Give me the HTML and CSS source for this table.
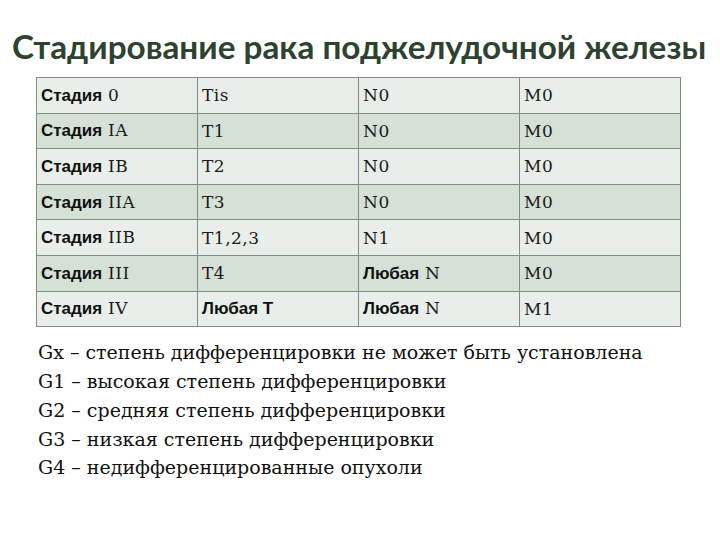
FILE: index.html
```html
<!DOCTYPE html>
<html lang="ru">
<head>
<meta charset="utf-8">
<link rel="stylesheet" href="styles.css">
</head>
<body>
<div class="slide">
  <h1 class="title">Стадирование рака поджелудочной железы</h1>
  <table class="stages">
    <tr class="odd"><td><span class="sans">Стадия</span> 0</td><td>Tis</td><td>N0</td><td>M0</td></tr>
    <tr class="even"><td><span class="sans">Стадия</span> IA</td><td>T1</td><td>N0</td><td>M0</td></tr>
    <tr class="odd"><td><span class="sans">Стадия</span> IB</td><td>T2</td><td>N0</td><td>M0</td></tr>
    <tr class="even"><td><span class="sans">Стадия</span> IIA</td><td>T3</td><td>N0</td><td>M0</td></tr>
    <tr class="odd"><td><span class="sans">Стадия</span> IIB</td><td>T1,2,3</td><td>N1</td><td>M0</td></tr>
    <tr class="even"><td><span class="sans">Стадия</span> III</td><td>T4</td><td><span class="sans">Любая</span> N</td><td>M0</td></tr>
    <tr class="odd"><td><span class="sans">Стадия</span> IV</td><td><span class="sans">Любая Т</span></td><td><span class="sans">Любая</span> N</td><td>M1</td></tr>
  </table>
  <div class="notes">
    <p>Gx – степень дифференцировки не может быть установлена</p>
    <p>G1 – высокая степень дифференцировки</p>
    <p>G2 – средняя степень дифференцировки</p>
    <p>G3 – низкая степень дифференцировки</p>
    <p>G4 – недифференцированные опухоли</p>
  </div>
</div>
</body>
</html>
```
FILE: styles.css
```css
html, body {
  margin: 0;
  padding: 0;
  background: #ffffff;
}
.slide {
  width: 720px;
  height: 540px;
  position: relative;
  overflow: hidden;
}
.title {
  margin: 0;
  padding: 25px 0 0 12px;
  font-family: Lato, "Open Sans", sans-serif;
  font-weight: bold;
  font-size: 33.3px;
  line-height: 42px;
  color: #2f4232;
  white-space: nowrap;
}
.stages {
  margin: 10px 0 0 36px;
  border-collapse: collapse;
  width: 645px;
  table-layout: fixed;
  font-family: "DejaVu Serif", serif;
  font-size: 17px;
  letter-spacing: 0.5px;
  color: #1a1a1a;
}
.stages td {
  border: 1px solid #808e82;
  height: 35.6px;
  padding: 0 0 0 4px;
  vertical-align: middle;
  box-sizing: border-box;
}
.stages tr.odd td { background: #e9eeea; }
.stages tr.even td { background: #d5e1d7; }
.sans {
  font-family: "Liberation Sans", Arial, sans-serif;
  font-weight: bold;
  font-size: 17px;
  letter-spacing: 0;
  color: #111;
}
.notes {
  margin: 11px 0 0 38px;
  font-family: "DejaVu Serif", serif;
  font-size: 19px;
  color: #111;
}
.notes p {
  margin: 0;
  line-height: 28.8px;
}
```
